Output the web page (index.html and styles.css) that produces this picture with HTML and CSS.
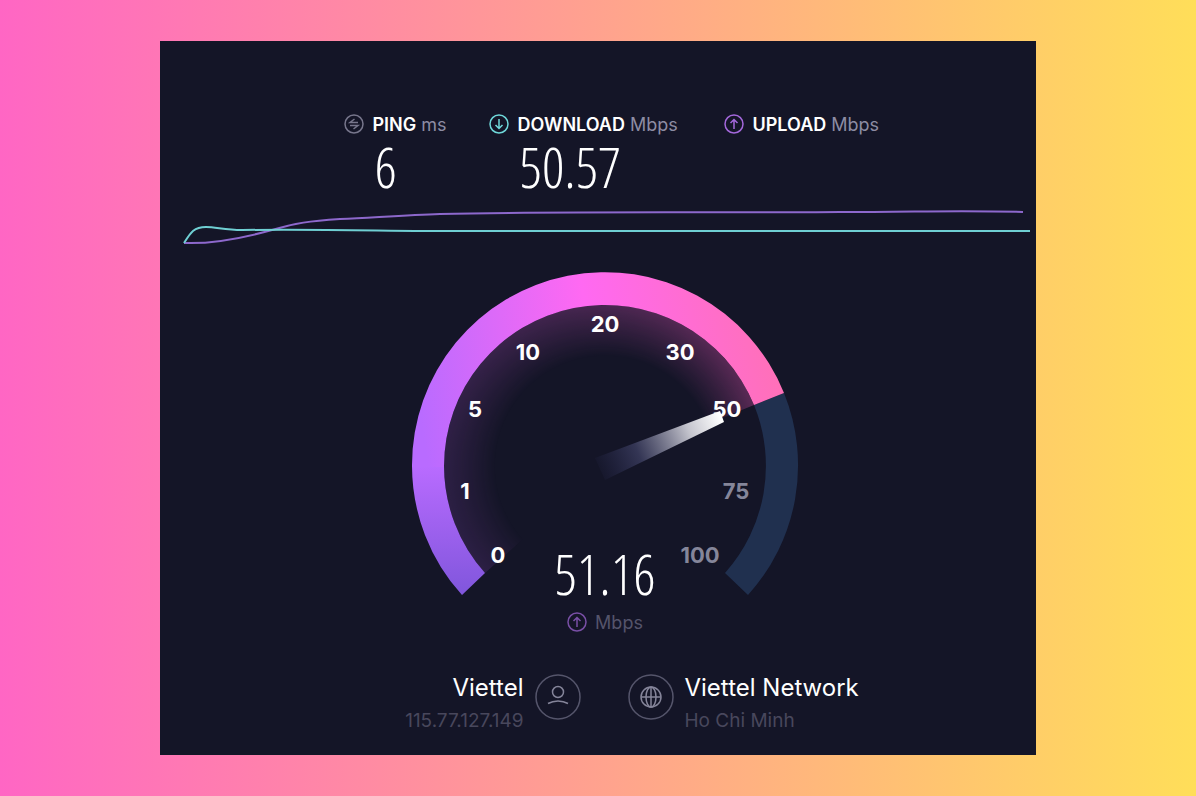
FILE: index.html
```html
<!DOCTYPE html>
<html lang="en">
<head>
    <meta charset="utf-8">
    <title>Speed Test</title>
    <link rel="stylesheet" href="styles.css">
</head>
<body>
    <main class="panel">
        <section class="metrics">
            <div class="metric">
                <div class="metric-label">
                    <svg class="icon ping" viewBox="0 0 20 20"><circle cx="10" cy="10" r="9"/><path d="M14 8.500H6L10.500 5M6 11.500h8L9.500 15"/></svg>
                    <span><strong>PING</strong> ms</span>
                </div>
                <div class="value">6</div>
            </div>
            <div class="metric">
                <div class="metric-label">
                    <svg class="icon download" viewBox="0 0 20 20"><circle cx="10" cy="10" r="9"/><path d="M10 5v9.500M6.500 11l3.500 3.500 3.500-3.500"/></svg>
                    <span><strong>DOWNLOAD</strong> Mbps</span>
                </div>
                <div class="value">50.57</div>
            </div>
            <div class="metric">
                <div class="metric-label">
                    <svg class="icon upload" viewBox="0 0 20 20"><circle cx="10" cy="10" r="9"/><path d="M10 15V5.500M6.500 9l3.500-3.500L13.500 9"/></svg>
                    <span><strong>UPLOAD</strong> Mbps</span>
                </div>
            </div>
        </section>

        <svg class="chart" viewBox="0 0 876 44">
            <path class="line-upload" d="M24 38C50 39 76 35 112 25C135 18 150 16 180 14C220 12 250 10 280 9C400 6 560 8 680 7C760 7 800 5 863 7"/>
            <path class="line-download" d="M24 38C31 27 34 22 46 22C56 22 65 25 82 25C160 24 230 26 300 26H870"/>
        </svg>

        <section class="gauge">
            <svg class="dial" viewBox="-193 -193 386 323">
                <defs>
                    <linearGradient id="low" gradientUnits="userSpaceOnUse" x1="0" y1="0" x2="0" y2="129">
                        <stop offset="0" stop-color="#b96bff"/>
                        <stop offset="1" stop-color="#8056dc"/>
                    </linearGradient>
                    <linearGradient id="high" gradientUnits="userSpaceOnUse" x1="-177" y1="0" x2="180" y2="-60">
                        <stop offset="0" stop-color="#b96bff"/>
                        <stop offset="0.5" stop-color="#ff69f2"/>
                        <stop offset="1" stop-color="#ff70b8"/>
                    </linearGradient>
                    <linearGradient id="tint" gradientUnits="userSpaceOnUse" x1="-160" y1="90" x2="150" y2="-70">
                        <stop offset="0" stop-color="#8a4ac0" stop-opacity="0.5"/>
                        <stop offset="1" stop-color="#d84fa8"/>
                    </linearGradient>
                    <radialGradient id="edge" gradientUnits="userSpaceOnUse" cx="0" cy="0" r="161">
                        <stop offset="0.68" stop-color="#fff" stop-opacity="0"/>
                        <stop offset="1" stop-color="#fff" stop-opacity="0.36"/>
                    </radialGradient>
                    <mask id="glow" maskUnits="userSpaceOnUse" x="-193" y="-193" width="386" height="323">
                        <circle r="161" fill="url(#edge)"/>
                    </mask>
                    <linearGradient id="beam" gradientUnits="userSpaceOnUse" x1="-12" y1="5" x2="116" y2="-48">
                        <stop offset="0" stop-color="#2a2c55" stop-opacity="0"/>
                        <stop offset="0.35" stop-color="#3c3e60" stop-opacity="0.8"/>
                        <stop offset="0.75" stop-color="#c4c4cd"/>
                        <stop offset="1" stop-color="#fff"/>
                    </linearGradient>
                </defs>
                <path fill="url(#tint)" mask="url(#glow)" d="M0 0L-120 107A161 161 0 1 1 149 -61Z"/>
                <path fill="#20304f" d="M179 -73A193 193 0 0 1 143 129L120 107A161 161 0 0 0 149 -61Z"/>
                <path fill="url(#low)" d="M-143 129A193 193 0 0 1 -193 0H-161A161 161 0 0 0 -120 107Z"/>
                <path fill="url(#high)" d="M-193 1V0A193 193 0 0 1 179 -73L149 -61A161 161 0 0 0 -161 0V1Z"/>
                <g class="ticks">
                    <text x="-107" y="97">0</text>
                    <text x="-140" y="33">1</text>
                    <text x="-130" y="-49">5</text>
                    <text x="-77" y="-106">10</text>
                    <text x="0" y="-134">20</text>
                    <text x="75" y="-106">30</text>
                    <text x="122" y="-49">50</text>
                    <text class="off" x="131" y="33">75</text>
                    <text class="off" x="95" y="97">100</text>
                </g>
                <path fill="url(#beam)" d="M-10 -8L115 -55L119 -44L0 14Z"/>
            </svg>
            <div class="readout">
                <div class="value">51.16</div>
                <div class="unit">
                    <svg class="icon upload" viewBox="0 0 20 20"><circle cx="10" cy="10" r="9"/><path d="M10 15V5.500M6.500 9l3.500-3.500L13.500 9"/></svg>
                    <span>Mbps</span>
                </div>
            </div>
        </section>

        <footer class="connection">
            <div class="host client">
                <div>
                    <div class="name">Viettel</div>
                    <div class="detail">115.77.127.149</div>
                </div>
                <svg class="badge" viewBox="0 0 46 46"><circle class="ring" cx="23" cy="23" r="22"/><circle cx="23" cy="18" r="5.500"/><path d="M13 29.500C19 26 27 26 33 29.500"/></svg>
            </div>
            <div class="host">
                <svg class="badge" viewBox="0 0 46 46"><circle class="ring" cx="23" cy="23" r="22"/><circle cx="23" cy="23" r="10"/><ellipse cx="23" cy="23" rx="5" ry="10"/><path d="M23 13v20M13 23h20"/></svg>
                <div>
                    <div class="name">Viettel Network</div>
                    <div class="detail">Ho Chi Minh</div>
                </div>
            </div>
        </footer>
    </main>
</body>
</html>
```
FILE: styles.css
```css
* {
    box-sizing: border-box;
}
body {
    margin: 0;
    min-height: 100vh;
    padding: 41px 160px;
    background: linear-gradient(to right, #ff66c4, #ffde59);
    font-family: Inter, "Open Sans", sans-serif;
    color: #fff;
}
svg {
    display: block;
    fill: none;
}
.panel {
    background-color: #141527;
    padding: 72px 0 17px;
}
.metrics {
    display: grid;
    grid-template-columns: 145px 235px 157px;
    justify-content: center;
    padding-left: 28px;
    height: 92px;
}
.metric-label {
    display: flex;
    align-items: center;
    gap: 9px;
    height: 22px;
    font-size: 18px;
    color: #8d8ca3;
    white-space: nowrap;
}
.metric-label strong {
    font-weight: 600;
    color: #fff;
}
.icon {
    width: 20px;
    height: 20px;
    flex: none;
    stroke-width: 1.5;
}
.icon.ping {
    stroke: #77768c;
}
.icon.download {
    stroke: #6fd8da;
}
.icon.upload {
    stroke: #a468dc;
}
.value {
    font-family: "Open Sans Condensed Light", "Roboto Condensed Light", Roboto, sans-serif;
    font-weight: 100;
    font-size: 56px;
    line-height: 62px;
}
.metric .value {
    padding-left: 31px;
}
.chart {
    width: 100%;
    stroke-width: 2;
}
.line-upload {
    stroke: #8d68cc;
}
.line-download {
    stroke: #6fcfd3;
}
.gauge {
    display: grid;
    justify-items: center;
    padding: 24px 0 0 14px;
}
.gauge > * {
    grid-area: 1 / 1;
}
.dial {
    width: 386px;
    margin-bottom: 40px;
    overflow: visible;
}
.ticks {
    fill: #fff;
    font-size: 22px;
    font-weight: 700;
    text-anchor: middle;
}
.ticks .off {
    fill: #85869a;
}
.readout {
    align-self: end;
}
.unit {
    display: flex;
    justify-content: center;
    align-items: center;
    gap: 8px;
    height: 24px;
    margin: 6px 0 2px;
    font-size: 18px;
    color: #55546b;
}
.unit .icon {
    opacity: 0.7;
}
.connection {
    display: grid;
    grid-template-columns: 1fr 1fr;
    column-gap: 47px;
    padding: 36px 0 0 12px;
}
.host {
    display: flex;
    gap: 11px;
}
.client {
    justify-content: flex-end;
    text-align: right;
}
.name {
    font-size: 24px;
    line-height: 32px;
}
.detail {
    font-size: 19px;
    line-height: 34px;
    color: #48475c;
}
.badge {
    width: 46px;
    height: 46px;
    flex: none;
    margin-top: 2px;
    stroke: #85859a;
    stroke-width: 1.5;
}
.ring {
    stroke: #55556b;
}
```
